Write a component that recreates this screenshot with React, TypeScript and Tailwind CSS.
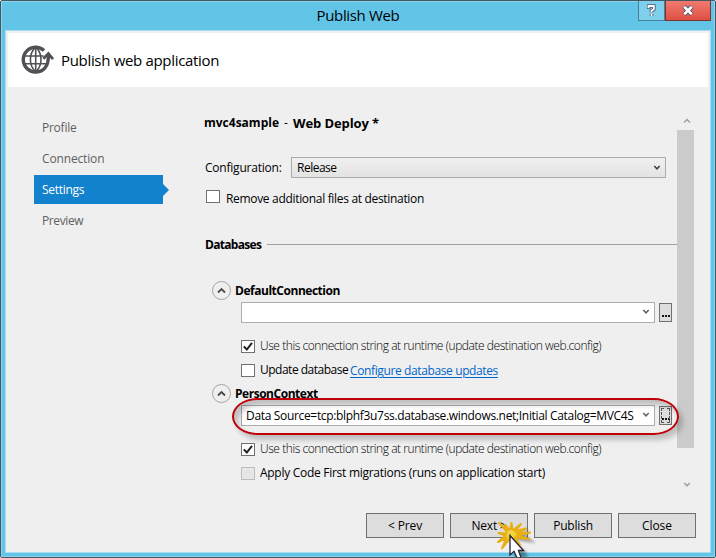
import type { ReactNode } from "react";

const LABEL = "block whitespace-pre pt-px text-[12px] leading-[16px]";

function Label({ className = "", children }: { className?: string; children: ReactNode }) {
  return <span className={`${LABEL} ${className}`}>{children}</span>;
}

function Chevron({ up = false, className = "" }: { up?: boolean; className?: string }) {
  return (
    <svg width="8" height="6" viewBox="0 0 8 6" className={className} fill="none" stroke="currentColor" strokeWidth="1.5">
      <path d={up ? "M1 4.5 4 1.5 7 4.5" : "M1.3 1 4 3.8 6.7 1"} />
    </svg>
  );
}

function Checkbox({ checked = false, disabled = false }: { checked?: boolean; disabled?: boolean }) {
  return (
    <span
      className={`block h-[13px] w-[14px] shrink-0 border ${
        disabled ? "border-[#bcbcbc] bg-[#e6e6e6]" : "border-[#707070] bg-white"
      }`}
    >
      {checked && (
        <svg width="12" height="11" viewBox="0 0 12 11" fill="none" stroke="#212121" strokeWidth="2">
          <path d="M1.8 5.4 4.8 8.5 10 1.8" />
        </svg>
      )}
    </span>
  );
}

function Expander({ title, className }: { title: string; className: string }) {
  return (
    <div className="ml-[12px] flex h-[19px] items-start">
      <span className="flex h-[19px] w-[19px] shrink-0 items-center justify-center rounded-full border border-[#a5a5a5] text-[#4a4a4a]">
        <svg width="9" height="7" viewBox="0 0 9 7" fill="none" stroke="currentColor" strokeWidth="1.8">
          <path d="M1 5.5 4.5 2 8 5.5" />
        </svg>
      </span>
      <Label className={`mt-[1px] ml-[4px] font-bold ${className}`}>{title}</Label>
    </div>
  );
}

function ConnectionInput({ value = "", focused = false }: { value?: string; focused?: boolean }) {
  return (
    <div className="ml-[41px] flex h-[21px] items-center">
      <div className="flex h-[21px] w-[414px] items-start border border-[#abadb3] bg-white pl-[4px]">
        <Label className="mt-[1px] w-[391px] tracking-[-0.33px]">{value}</Label>
        <Chevron className="mt-[6px] ml-[5px] text-[#606060]" />
      </div>
      <button className="relative ml-[4px] flex h-[19px] w-[13px] items-end justify-center gap-[1px] border border-[#707070] bg-[#dddddd] pb-[4px]">
        {focused && <span className="absolute inset-[1px] border border-dashed border-[#555]" />}
        <span className="h-[2px] w-[2px] bg-[#1b1020]" />
        <span className="h-[2px] w-[2px] bg-[#1b1020]" />
        <span className="h-[2px] w-[2px] bg-[#1b1020]" />
      </button>
    </div>
  );
}

function NavItem({ text, className, active = false }: { text: string; className: string; active?: boolean }) {
  return (
    <div className="mb-[2px] flex h-[29px] items-center">
      <div className={`flex h-[29px] w-[129px] pl-[8px] pt-[6px] ${active ? "bg-[#1382ce] text-white" : "text-[#5f5f5f]"}`}>
        <Label className={className}>{text}</Label>
      </div>
      {active && (
        <svg width="6" height="12" viewBox="0 0 6 12" fill="#1382ce">
          <path d="M0 0 6 6 0 12Z" />
        </svg>
      )}
    </div>
  );
}

function PushButton({ text, className }: { text: string; className: string }) {
  return (
    <button className="flex h-[25px] w-[78px] justify-center border border-[#707070] bg-[#dddddd] pt-[3px]">
      <Label className={className}>{text}</Label>
    </button>
  );
}

function GlobeIcon() {
  return (
    <svg width="34" height="30" viewBox="0 0 34 30" fill="none" stroke="#505055" className="mt-[12px] ml-[13px] shrink-0">
      <path d="M23 5.4A12.4 12.4 0 1 0 24 22.8C26.8 19.8 27.6 15 27.4 9" strokeWidth="3.4" />
      <path d="M14.7 3v24M3.5 11h19M3.5 18.7h22" strokeWidth="1.6" />
      <path d="M14.2 2.5C7.8 9 7.8 20 14.2 26.5M15.2 2.5C21.6 9 21.6 20 15.2 26.5" strokeWidth="1.6" />
      <path d="M22.3 13.8 27.4 8.6 32 14.2" strokeWidth="2.8" />
    </svg>
  );
}

function ClickCursor() {
  return (
    <svg width="48" height="42" viewBox="492 516 48 42" className="absolute top-[515px] left-[491px]">
      <defs>
        <filter id="soft" x="-30%" y="-30%" width="170%" height="170%">
          <feGaussianBlur stdDeviation="1.6" />
        </filter>
      </defs>
      <g filter="url(#soft)" opacity="0.35">
        <path d="M514 540 536 543 525 535 530 530 520 533Z" />
        <path d="M514 541 515 558 528 558 526 552Z" />
      </g>
      <path
        d="M510 535 499 523 507.5 530.5 505 525 510 530.5 511.5 523 512.5 530.5 521 524 515 531 526 528.5 517 533 530 532.8 517 535.5 529 539 515 537.5 520 545 511 537 502 548.5 506.5 538 498 542 505.5 535.5 498.5 533 507 533.5Z"
        fill="#f0cf30"
        stroke="#e8ae12"
        strokeWidth="2"
        strokeLinejoin="round"
      />
      <circle cx="510.5" cy="533.5" r="3.5" fill="#efd445" />
      <path
        d="M510 535.5V555L514 551.3 517.5 559H521.5L518.5 550.5H523.5Z"
        fill="#fff"
        stroke="#242333"
        strokeWidth="1.3"
      />
    </svg>
  );
}

export default function App() {
  return (
    <div className="relative h-[558px] w-[716px] overflow-hidden rounded-[2px] border border-[#435760] bg-[#62c5e8] font-['Open_Sans','Noto_Sans',sans-serif] text-black">
      <div className="h-[556px] w-[714px] border border-[#8fd3ec] px-[3px] pb-[3px]">
        <header className="flex h-[28px] justify-between">
          <div className="w-[73px]" />
          <h1 className="mt-[2px] flex h-[22px] w-[560px] justify-center whitespace-nowrap text-[15px] leading-[22px] tracking-[-0.35px]">
            Publish Web
          </h1>
          <div className="-mt-[1px] flex h-[20px] w-[73px]">
            <button className="flex h-[20px] w-[27px] items-center justify-center border border-t-0 border-[#477f96] bg-[#7fd0ec]">
              <svg width="9" height="13" viewBox="0 0 9 13" fill="none">
                <path d="M1.5 5V2H6.8V5.2L4.5 6.8V8.4M4.5 10V12" stroke="#4b5870" strokeWidth="3.6" />
                <path d="M1.5 4.2V2H6.8V5.2L4.5 6.8V8.4M4.5 10V12" stroke="#fff" strokeWidth="1.8" />
              </svg>
            </button>
            <button className="flex h-[20px] w-[46px] items-center justify-center border border-t-0 border-[#79362f] bg-linear-to-b from-[#f07a70] to-[#df4e43]">
              <svg width="12" height="11" viewBox="0 0 12 11" fill="none">
                <path d="M2 1.5 10 9.5M10 1.5 2 9.5" stroke="#5b4a5a" strokeWidth="4.5" />
                <path d="M2.2 1.7 9.8 9.3M9.8 1.7 2.2 9.3" stroke="#fff" strokeWidth="2.7" />
              </svg>
            </button>
          </div>
        </header>

        <div className="h-[523px] w-[706px] border border-[#a9dcf0] bg-[#efefef] pt-[2px]">
          <div className="mx-[2px] flex h-[54px] bg-white">
            <GlobeIcon />
            <span className="mt-[16px] ml-[6px] whitespace-nowrap text-[15px] leading-[22px] tracking-[-0.32px]">
              Publish web application
            </span>
          </div>

          <div className="flex h-[406px]">
            <nav className="w-[198px] pt-[26px] pl-[28px]">
              <NavItem text="Profile" className="tracking-[-0.25px]" />
              <NavItem text="Connection" className="tracking-[-0.15px]" />
              <NavItem text="Settings" className="tracking-[-0.3px]" active />
              <NavItem text="Preview" className="tracking-[-0.4px]" />
            </nav>

            <main className="-ml-[4px] w-[477px] pt-[27px]">
              <div className="ml-[4px] flex h-[20px] font-bold">
                <Label className="w-[80px]">mvc4sample</Label>
                <Label className="w-[9px] font-normal">-</Label>
                <Label className="text-[13px] tracking-[-0.1px]">Web Deploy *</Label>
              </div>

              <div className="mt-[23px] ml-[5px] flex h-[21px]">
                <Label className="mt-[2px] w-[86px] tracking-[-0.22px]">Configuration:</Label>
                <div className="flex h-[21px] w-[375px] justify-between border border-[#ababab] bg-linear-to-b from-[#f0f0f0] to-[#e3e3e3] pr-[4px] pl-[5px]">
                  <Label className="mt-[1px] tracking-[-0.5px]">Release</Label>
                  <Chevron className="mt-[7px] text-[#404040]" />
                </div>
              </div>

              <div className="mt-[12px] ml-[6px] flex h-[17px]">
                <Checkbox />
                <Label className="ml-[6px] tracking-[-0.32px]">Remove additional files at destination</Label>
              </div>

              <div className="mt-[29px] ml-[5px] flex h-[16px]">
                <Label className="w-[62px] font-bold tracking-[-0.7px]">Databases</Label>
                <span className="mt-[8px] h-px flex-1 bg-[#a0a0a0]" />
              </div>

              <div className="mt-[29px]">
                <Expander title="DefaultConnection" className="tracking-[-0.47px]" />
              </div>
              <div className="mt-[2px]">
                <ConnectionInput />
              </div>
              <div className="mt-[17px] ml-[41px] flex h-[14px]">
                <Checkbox checked />
                <Label className="-mt-[3px] ml-[5px] font-light tracking-[-0.44px]">
                  Use this connection string at runtime (update destination web.config)
                </Label>
              </div>
              <div className="mt-[10px] ml-[41px] flex h-[14px]">
                <Checkbox />
                <Label className="-mt-[3px] ml-[5px] w-[90px] tracking-[-0.5px]">Update database</Label>
                <a className="-mt-[2px] text-[#0066cc] underline underline-offset-2">
                  <Label className="tracking-[-0.38px]">Configure database updates</Label>
                </a>
              </div>

              <div className="mt-[6px]">
                <Expander title="PersonContext" className="tracking-[-0.47px]" />
              </div>
              <div className="mt-[2px]">
                <ConnectionInput focused value="Data Source=tcp:blphf3u7ss.database.windows.net;Initial Catalog=MVC4S" />
              </div>
              <div className="mt-[17px] ml-[41px] flex h-[14px]">
                <Checkbox checked />
                <Label className="-mt-[3px] ml-[5px] font-light tracking-[-0.44px]">
                  Use this connection string at runtime (update destination web.config)
                </Label>
              </div>
              <div className="mt-[10px] ml-[41px] flex h-[14px]">
                <Checkbox disabled />
                <Label className="-mt-[3px] ml-[5px] tracking-[-0.28px]">
                  Apply Code First migrations (runs on application start)
                </Label>
              </div>
            </main>

            <div className="flex w-[17px] flex-col items-center pt-[31px] text-[#a0a0a0]">
              <Chevron up className="ml-[2px]" />
              <div className="mt-[6px] h-[318px] w-[17px] shrink-0 bg-[#cbcbcb]" />
              <Chevron className="mt-[34px] ml-[2px]" />
            </div>
          </div>

          <footer className="mt-[20px] flex h-[25px] justify-end gap-[6px] pr-[14px]">
            <PushButton text="< Prev" className="tracking-[-0.1px]" />
            <PushButton text="Next >" className="tracking-[-0.2px]" />
            <PushButton text="Publish" className="tracking-[-0.2px]" />
            <PushButton text="Close" className="tracking-[-0.1px]" />
          </footer>
        </div>
      </div>

      <div className="absolute top-[397px] left-[231px] h-[37px] w-[447px] rounded-[26px/19px] border-2 border-[#c00008] shadow-[4px_5px_5px_rgba(0,0,0,0.2),inset_4px_5px_5px_rgba(0,0,0,0.2)]" />
      <ClickCursor />
    </div>
  );
}
